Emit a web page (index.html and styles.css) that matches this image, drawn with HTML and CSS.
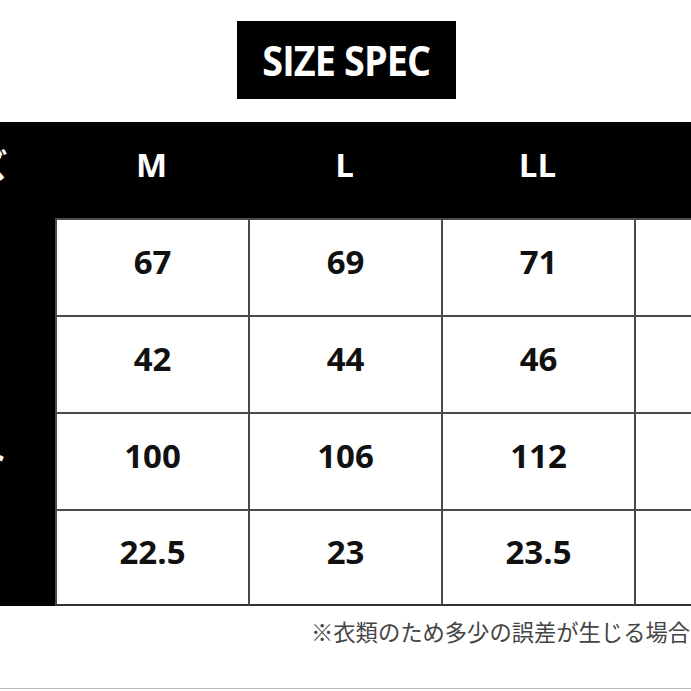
FILE: index.html
```html
<!DOCTYPE html>
<html lang="ja">
<head>
<meta charset="utf-8">
<title>SIZE SPEC</title>
<link rel="stylesheet" href="styles.css">
</head>
<body>
<div class="page">
  <div class="title"><span>SIZE SPEC</span></div>
  <div class="table">
    <div class="head label">サイズ</div>
    <div class="head">M</div>
    <div class="head">L</div>
    <div class="head">LL</div>
    <div class="head">3L</div>

    <div class="label">着丈</div>
    <div class="cell">67</div>
    <div class="cell">69</div>
    <div class="cell">71</div>
    <div class="cell last">73</div>

    <div class="label">身幅</div>
    <div class="cell">42</div>
    <div class="cell">44</div>
    <div class="cell">46</div>
    <div class="cell last">48</div>

    <div class="label">バスト</div>
    <div class="cell">100</div>
    <div class="cell">106</div>
    <div class="cell">112</div>
    <div class="cell last">118</div>

    <div class="label">袖丈</div>
    <div class="cell bottom">22.5</div>
    <div class="cell bottom">23</div>
    <div class="cell bottom">23.5</div>
    <div class="cell bottom last">24</div>
  </div>
  <p class="note">※衣類のため多少の誤差が生じる場合がございます。</p>
  <div class="rule"></div>
</div>
</body>
</html>
```
FILE: styles.css
```css
html, body {
  margin: 0;
  padding: 0;
  background: #fff;
}
body {
  width: 691px;
  height: 691px;
  overflow: hidden;
}
.page {
  width: 691px;
  height: 691px;
  display: flex;
  flex-direction: column;
  overflow: hidden;
}
.title {
  margin: 21px 0 0 237px;
  width: 219px;
  height: 78px;
  background: #000;
  color: #fff;
  display: flex;
  align-items: center;
  justify-content: center;
  font-family: "Open Sans", sans-serif;
  font-weight: 700;
  font-size: 42px;
  letter-spacing: -1px;
  flex: none;
}
.title span {
  display: inline-block;
  transform: scaleX(0.9);
  position: relative;
  top: -1px;
  white-space: nowrap;
}
.table {
  margin: 23px 0 0 -138px;
  display: grid;
  grid-template-columns: repeat(5, 193px);
  grid-template-rows: 96px repeat(4, 97px);
  background: #000;
  width: 965px;
  flex: none;
  font-family: "Open Sans", "Noto Sans CJK JP", sans-serif;
  font-weight: 700;
  font-size: 33px;
}
.table > div {
  display: flex;
  align-items: center;
  justify-content: center;
  box-sizing: border-box;
  padding-bottom: 12px;
  white-space: nowrap;
}
.head {
  color: #fff;
}
.label {
  color: #fff;
  font-family: "Noto Sans CJK JP", sans-serif;
  font-size: 33px;
}
.cell {
  background: #fff;
  color: #111;
  border-left: 2px solid #4a4a4a;
  border-top: 2px solid #4a4a4a;
}
.cell.bottom {
  border-bottom: 2px solid #333;
}
.note {
  margin: 11px 0 0 311px;
  font-family: "Noto Sans CJK JP", sans-serif;
  font-size: 22.3px;
  line-height: 28px;
  color: #444;
  white-space: nowrap;
  flex: none;
}
.rule {
  margin-top: auto;
  margin-bottom: 2px;
  height: 1px;
  background: #bbb;
  flex: none;
}
```
